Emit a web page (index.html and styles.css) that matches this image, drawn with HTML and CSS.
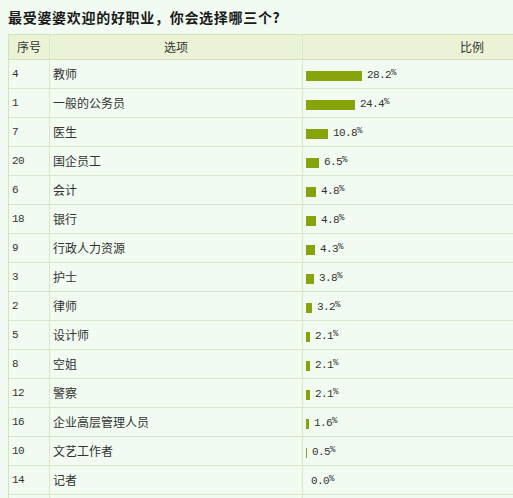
FILE: index.html
```html
<!DOCTYPE html>
<html lang="zh-CN">
<head>
<meta charset="utf-8">
<title>最受婆婆欢迎的好职业</title>
<link rel="stylesheet" href="styles.css">
</head>
<body>
<div class="page">
<div class="title">最受婆婆欢迎的好职业，你会选择哪三个?</div>
<div class="table">
  <div class="row head">
    <div class="cell c1">序号</div>
    <div class="cell c2">选项</div>
    <div class="cell c3">比例</div>
  </div>
  <div class="row"><div class="cell c1 num">4</div><div class="cell c2">教师</div><div class="cell c3"><span class="bar" style="width:56px"></span><span class="pct">28.2<i>%</i></span></div></div>
  <div class="row"><div class="cell c1 num">1</div><div class="cell c2">一般的公务员</div><div class="cell c3"><span class="bar" style="width:49px"></span><span class="pct">24.4<i>%</i></span></div></div>
  <div class="row"><div class="cell c1 num">7</div><div class="cell c2">医生</div><div class="cell c3"><span class="bar" style="width:22px"></span><span class="pct">10.8<i>%</i></span></div></div>
  <div class="row"><div class="cell c1 num">20</div><div class="cell c2">国企员工</div><div class="cell c3"><span class="bar" style="width:13px"></span><span class="pct">6.5<i>%</i></span></div></div>
  <div class="row"><div class="cell c1 num">6</div><div class="cell c2">会计</div><div class="cell c3"><span class="bar" style="width:10px"></span><span class="pct">4.8<i>%</i></span></div></div>
  <div class="row"><div class="cell c1 num">18</div><div class="cell c2">银行</div><div class="cell c3"><span class="bar" style="width:10px"></span><span class="pct">4.8<i>%</i></span></div></div>
  <div class="row"><div class="cell c1 num">9</div><div class="cell c2">行政人力资源</div><div class="cell c3"><span class="bar" style="width:9px"></span><span class="pct">4.3<i>%</i></span></div></div>
  <div class="row"><div class="cell c1 num">3</div><div class="cell c2">护士</div><div class="cell c3"><span class="bar" style="width:8px"></span><span class="pct">3.8<i>%</i></span></div></div>
  <div class="row"><div class="cell c1 num">2</div><div class="cell c2">律师</div><div class="cell c3"><span class="bar" style="width:6px"></span><span class="pct">3.2<i>%</i></span></div></div>
  <div class="row"><div class="cell c1 num">5</div><div class="cell c2">设计师</div><div class="cell c3"><span class="bar" style="width:4px"></span><span class="pct">2.1<i>%</i></span></div></div>
  <div class="row"><div class="cell c1 num">8</div><div class="cell c2">空姐</div><div class="cell c3"><span class="bar" style="width:4px"></span><span class="pct">2.1<i>%</i></span></div></div>
  <div class="row"><div class="cell c1 num">12</div><div class="cell c2">警察</div><div class="cell c3"><span class="bar" style="width:4px"></span><span class="pct">2.1<i>%</i></span></div></div>
  <div class="row"><div class="cell c1 num">16</div><div class="cell c2">企业高层管理人员</div><div class="cell c3"><span class="bar" style="width:3px"></span><span class="pct">1.6<i>%</i></span></div></div>
  <div class="row"><div class="cell c1 num">10</div><div class="cell c2">文艺工作者</div><div class="cell c3"><span class="bar" style="width:1px"></span><span class="pct">0.5<i>%</i></span></div></div>
  <div class="row"><div class="cell c1 num">14</div><div class="cell c2">记者</div><div class="cell c3"><span class="bar" style="width:0px"></span><span class="pct">0.0<i>%</i></span></div></div>
  <div class="row last"><div class="cell c1 num"></div><div class="cell c2"></div><div class="cell c3"></div></div>
</div>
</div>
</body>
</html>
```

FILE: styles.css
```css
html, body {
  overflow: hidden;
}
body {
  margin: 0;
  background: #f1fbf1;
  font-family: "Noto Sans CJK SC", sans-serif;
  font-size: 12px;
  color: #333;
}
.page {
  width: 505px;
  height: 491px;
  padding: 7px 0 0 8px;
  overflow: hidden;
}
.title {
  font-size: 14px;
  font-weight: bold;
  letter-spacing: 0.7px;
  line-height: 20px;
  height: 20px;
  color: #1a1a1a;
  margin-bottom: 7px;
  white-space: nowrap;
}
.table {
  width: 633px;
  border-left: 1px solid #d4e3b8;
  border-top: 1px solid #d4e3b8;
}
.row {
  display: grid;
  grid-template-columns: 40px 253px 339px;
  height: 28px;
  border-bottom: 1px solid #d9e7c6;
}
.row.head {
  height: 24px;
  background: #ebf3d6;
  border-bottom: 1px solid #d4e3b8;
}
.cell {
  display: flex;
  align-items: center;
  padding-left: 3px;
  white-space: nowrap;
  line-height: 14px;
}
.c2, .c3 {
  border-left: 1px solid #d9e7c6;
}
.head .cell {
  justify-content: center;
  padding-left: 0;
  color: #333;
}
.num {
  font-family: "Liberation Mono", monospace;
  font-size: 11px;
  letter-spacing: -0.6px;
  padding-left: 3px;
}
.bar {
  display: inline-block;
  height: 10px;
  background: #86a30b;
  margin-right: 5px;
  margin-top: 4px;
}
.pct {
  font-family: "Liberation Mono", monospace;
  font-size: 11px;
  letter-spacing: -0.6px;
  color: #333;
  margin-top: 3px;
}
.pct i {
  font-style: normal;
  font-size: 9px;
  position: relative;
  top: -3px;
}
```
